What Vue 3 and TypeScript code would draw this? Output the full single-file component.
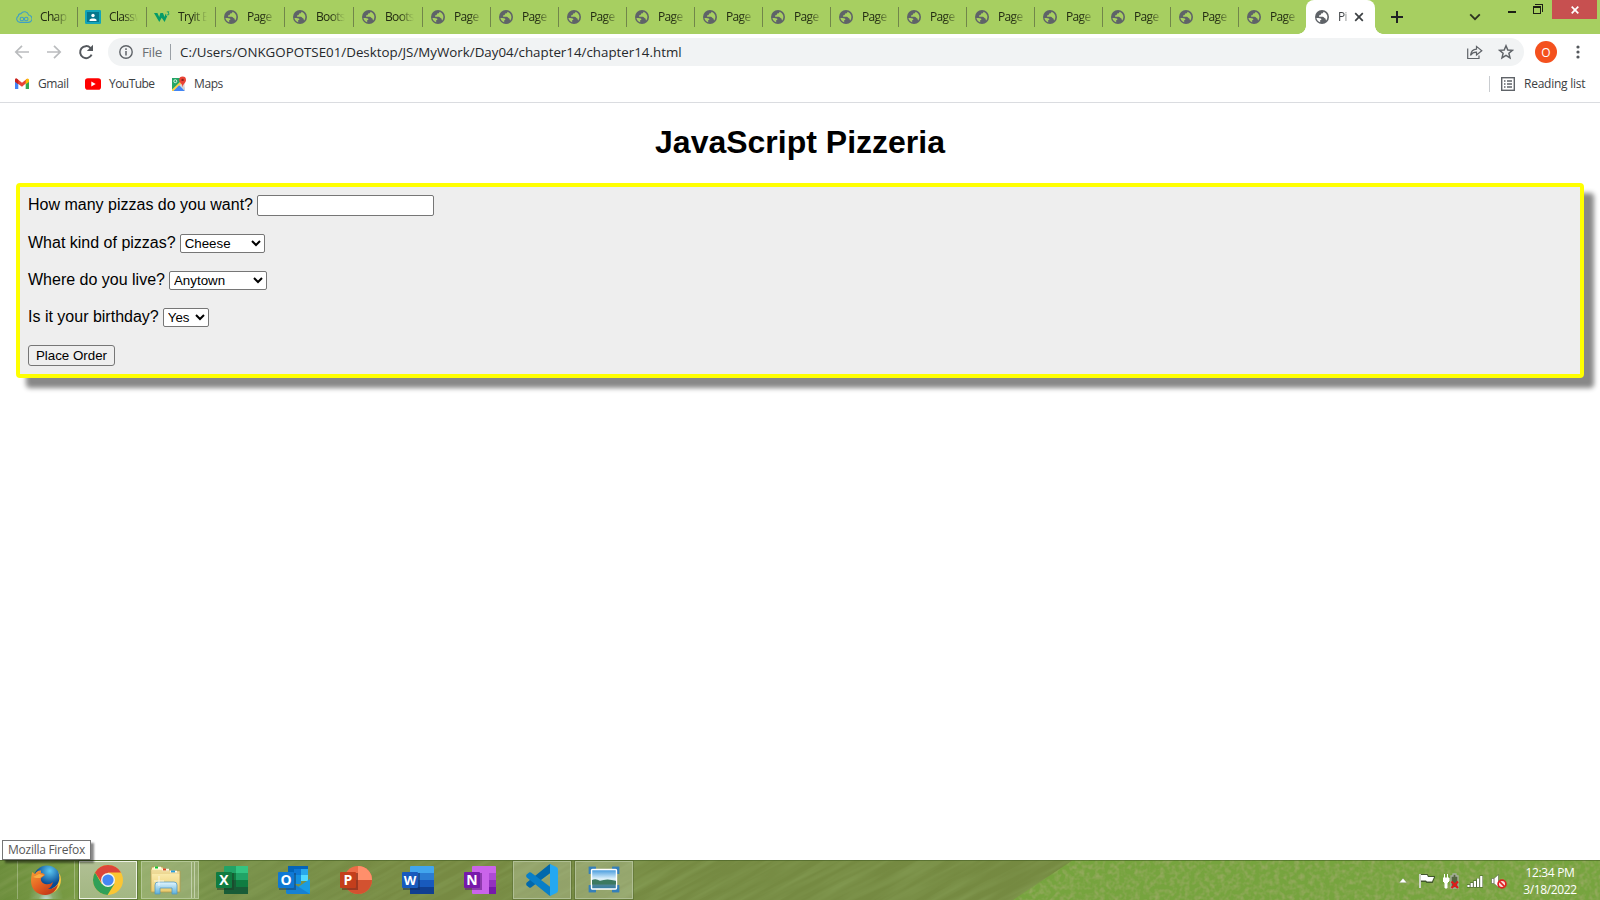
<script setup lang="ts">
import { ref } from 'vue'

type Icon = 'cloud' | 'classroom' | 'w3' | 'globe'
interface Tab { title: string; icon: Icon; wide: boolean }

const tabs: Tab[] = [
  { title: 'Chap', icon: 'cloud', wide: true },
  { title: 'Classw', icon: 'classroom', wide: true },
  { title: 'Tryit E', icon: 'w3', wide: true },
  { title: 'Page', icon: 'globe', wide: true },
  { title: 'Boots', icon: 'globe', wide: true },
  { title: 'Boots', icon: 'globe', wide: true },
  ...Array.from({ length: 13 }, (): Tab => ({ title: 'Page', icon: 'globe', wide: false })),
]

const kind = ref('Cheese')
const town = ref('Anytown')
const birthday = ref('Yes')
const quantity = ref('')
</script>

<template>
  <div class="screen">
    <svg class="defs" width="0" height="0">
      <symbol id="globe" viewBox="0 0 24 24">
        <circle cx="12" cy="12" r="10.5" fill="#5f6368" />
        <path d="M3.6 13.6 C6 13.2 8.5 13.2 10.2 14.2 C11.8 15.2 11 16.8 9.2 17 L9.3 20 C5.8 18.8 4 16.4 3.6 13.6 Z M14.2 4 C14 6.2 12.5 6.6 10.6 6.8 L10 9 L7.5 9.6 L7.7 11.8 L13 11.8 C15.2 12 14.8 14 17 14.2 C17.8 14.4 17.3 16.5 18.3 17.2 C21.4 13.4 20.9 6.6 14.2 4 Z" fill="currentColor" />
      </symbol>
    </svg>

    <header class="tabstrip">
      <div v-for="(t, i) in tabs" :key="i" class="tab" :class="{ wide: t.wide, last: i === tabs.length - 1 }">
        <svg v-if="t.icon === 'globe'" class="fav"><use href="#globe" /></svg>
        <svg v-else-if="t.icon === 'cloud'" class="fav" viewBox="0 0 16 16" fill="none" stroke="#3f9fc4" stroke-width="1.1">
          <path d="M4 13.4 A3.4 3.4 0 0 1 2.2 7.2 A3 3 0 0 1 5 4.6 A4.2 4.2 0 0 1 12.6 6 A3.7 3.7 0 0 1 12 13.4 Z" />
          <circle cx="5.9" cy="10" r="1.8" /><circle cx="10.2" cy="10" r="1.8" />
        </svg>
        <svg v-else-if="t.icon === 'classroom'" class="fav" viewBox="0 0 16 16">
          <rect y="1" width="16" height="14" rx="1.3" fill="#12a4ba" /><rect x="2" y="3" width="12" height="10" fill="#05768d" />
          <circle cx="8" cy="6.5" r="1.7" fill="#fff" /><path d="M4.5 12 V10.8 C5.5 9.1 10.5 9.1 11.5 10.8 V12Z" fill="#fff" />
        </svg>
        <svg v-else class="fav" viewBox="0 0 16 16">
          <path d="M0 4 H3.4 L5.2 8 L6.4 4 H9 L10.5 8 L11.6 4.4 L12.2 6.5 L13.2 7.2 L10.6 13 L7.7 8.8 L5.3 13 Z" fill="#059b68" />
          <path d="M12.8 2.8 H15 L14 4 Q15.4 4.3 15 5.4 Q14.2 6.3 12.7 5.7" fill="none" stroke="#059b68" stroke-width=".8" />
        </svg>
        <span class="tab-title">{{ t.title }}</span>
      </div>
      <div class="tab active">
        <svg class="fav"><use href="#globe" /></svg>
        <span class="tab-title">Pi</span>
        <svg class="tab-close" viewBox="0 0 10 10"><path d="M1.2 1.2 8.8 8.8M8.8 1.2 1.2 8.8" stroke="#3c4043" stroke-width="1.7" /></svg>
      </div>
      <svg class="new-tab" viewBox="0 0 14 14"><path d="M7 1V13M1 7H13" stroke="#202124" stroke-width="2" /></svg>
      <svg class="tab-search" viewBox="0 0 12 8"><path d="M1.2 1.4 6 6.2 10.8 1.4" fill="none" stroke="#2c331f" stroke-width="1.8" /></svg>
      <div class="window-controls">
        <svg class="minimize" viewBox="0 0 8 2"><rect width="8" height="2" fill="#1d2015" /></svg>
        <svg class="restore" viewBox="0 0 10 10" shape-rendering="crispEdges"><path d="M0 2H8V10H0ZM1 4V9H7V4ZM2 0H10V8H9V1H2Z" fill="#1d2015" fill-rule="evenodd" /></svg>
        <span class="close"><svg viewBox="0 0 8 8"><path d="M.7.7 7.3 7.3M7.3.7.7 7.3" stroke="#fff" stroke-width="1.7" /></svg></span>
      </div>
    </header>

    <div class="toolbar">
      <svg class="nav" viewBox="0 0 16 16"><path d="M15 8H2M8 1.8 1.8 8 8 14.2" fill="none" stroke="#babcbe" stroke-width="1.7" /></svg>
      <svg class="nav forward" viewBox="0 0 16 16"><path d="M1 8H14M8 1.8 14.2 8 8 14.2" fill="none" stroke="#babcbe" stroke-width="1.7" /></svg>
      <svg class="nav reload" viewBox="0 0 16 16"><path d="M13.6 10.6A6 6 0 1 1 12.4 3.9L14 5.2" fill="none" stroke="#54585d" stroke-width="2" /><path d="M15 .8V7H8.8Z" fill="#54585d" /></svg>
      <div class="omnibox">
        <svg class="info" viewBox="0 0 14 14"><circle cx="7" cy="7" r="6.2" fill="none" stroke="#5f6368" stroke-width="1.4" /><path d="M7 6V10.5M7 3.3V4.9" stroke="#5f6368" stroke-width="1.5" /></svg>
        <span class="scheme">File</span>
        <span class="divider"></span>
        <span class="url">C:/Users/ONKGOPOTSE01/Desktop/JS/MyWork/Day04/chapter14/chapter14.html</span>
        <svg class="share" viewBox="0 0 16 15" fill="none" stroke="#5f6368" stroke-width="1.2"><path d="M.7 3.5V13.5H12V10.5M3.5 10.4C4 6.3 6.2 4.3 9.5 4.2V1.4L14.8 5.7 9.5 10V7.2C6.8 7.1 5 8 3.5 10.4Z" /></svg>
        <svg class="star" viewBox="0 0 16 16"><path d="M8 1.8 9.8 6 14.4 6.3 10.9 9.3 12 13.9 8 11.4 4 13.9 5.1 9.3 1.6 6.3 6.2 6Z" fill="none" stroke="#5f6368" stroke-width="1.5" /></svg>
      </div>
      <span class="avatar">O</span>
      <svg class="kebab" viewBox="0 0 4 14"><circle cx="2" cy="2" r="1.6" /><circle cx="2" cy="7" r="1.6" /><circle cx="2" cy="12" r="1.6" /></svg>
    </div>

    <nav class="bookmarks">
      <svg class="bm-icon" viewBox="0 0 16 16">
        <path d="M1 3.5V13H4.3V6.5Z" fill="#4285f4" /><path d="M15 3.5V13H11.7V6.5Z" fill="#34a853" /><path d="M1 4Q1.3 2 3 2.8L8 6.8 13 2.8 14 3V5.6L8 10.8 1 5.6Z" fill="#ea4335" /><path d="M1 4Q1.3 2 3 2.8L4.3 4V8.2L1 5.8Z" fill="#c5221f" /><path d="M11.7 3.9 13 2.8Q15 2.2 15 4.1V5.9L11.7 8.3Z" fill="#fbbc04" />
      </svg>
      <span class="bm-label gmail">Gmail</span>
      <svg class="bm-icon yt" viewBox="0 0 16 16"><rect y="2.3" width="16" height="11.4" rx="2.8" fill="#f00" /><path d="M6.3 5.5V10.5L10.7 8Z" fill="#fff" /></svg>
      <span class="bm-label youtube">YouTube</span>
      <svg class="bm-icon" viewBox="0 0 16 16">
        <rect x="1" y="2" width="13" height="13" rx="1" fill="#e7e7e7" /><path d="M1 2H9L12 6 1 15Z" fill="#24a566" /><path d="M2 15 8 9 14 15Z" fill="#4285f4" /><path d="M1 13.5 10 5 11.5 6.5 3 15H1Z" fill="#fbd04a" /><path d="M2.5 15 8 9.5 13 15Z" fill="#4285f4" /><path d="M9 9 11 8 14 12V15Z" fill="#d4d5d6" /><circle cx="4.3" cy="5.2" r="1.5" fill="none" stroke="#d9f3e2" /><path d="M8.2 4A3.4 3.4 0 1 1 15 4C15 6.5 12.3 7.5 11.8 11.2 11.2 7.5 8.2 6.5 8.2 4Z" fill="#ea4335" /><circle cx="11.6" cy="3.9" r="1.2" fill="#8e241b" />
      </svg>
      <span class="bm-label maps">Maps</span>
      <span class="bm-divider"></span>
      <svg class="list-icon" viewBox="0 0 14 14" fill="none" stroke="#5f6368"><rect x=".7" y=".7" width="12.6" height="12.6" stroke-width="1.4" /><path d="M3 4H4.5M6 4H11M3 7H4.5M6 7H11M3 10H4.5M6 10H11" stroke-width="1.5" /></svg>
      <span class="bm-label reading">Reading list</span>
    </nav>

    <main class="page">
      <h1>JavaScript Pizzeria</h1>
      <form class="order" @submit.prevent>
        <div class="row first"><label for="qty">How many pizzas do you want?</label><input id="qty" v-model="quantity" type="text"></div>
        <div class="row"><label for="kind">What kind of pizzas?</label><select id="kind" v-model="kind" class="kind"><option>Cheese</option><option>Pepperoni</option></select></div>
        <div class="row"><label for="town">Where do you live?</label><select id="town" v-model="town" class="town"><option>Anytown</option><option>Sacramento</option></select></div>
        <div class="row"><label for="bday">Is it your birthday?</label><select id="bday" v-model="birthday" class="bday"><option>Yes</option><option>No</option></select></div>
        <button type="submit">Place Order</button>
      </form>
      <span class="tooltip">Mozilla Firefox</span>
    </main>

    <footer class="taskbar">
      <svg class="wallpaper" width="1600" height="40" viewBox="0 0 1600 40">
        <defs>
          <linearGradient id="field"><stop offset="0" stop-color="#6a8c3a" /><stop offset=".06" stop-color="#7d9f46" /><stop offset=".14" stop-color="#768f49" /><stop offset=".25" stop-color="#778a43" /><stop offset=".5" stop-color="#758a42" /><stop offset="1" stop-color="#75893f" /></linearGradient>
          <filter id="grain" x="0" y="0" width="100%" height="100%"><feTurbulence type="fractalNoise" baseFrequency=".2" numOctaves="2" seed="4" /><feColorMatrix values="0 0 0 0 .4  0 0 0 0 .42  0 0 0 0 .18  2.2 0 0 0 -.85" /></filter>
          <filter id="furrow" x="0" y="0" width="100%" height="100%"><feTurbulence type="fractalNoise" baseFrequency=".012 .16" numOctaves="3" seed="8" /><feColorMatrix values="0 0 0 0 .25  0 0 0 0 .36  0 0 0 0 .1  1.1 0 0 0 -.4" /></filter>
        </defs>
        <rect width="1600" height="40" fill="url(#field)" />
        <g transform="rotate(-28 500 20)"><rect x="-100" y="-300" width="1250" height="640" filter="url(#furrow)" /></g>
        <path d="M1013 40 1073 0H1600V40Z" fill="#76a43e" />
        <path d="M1013 40 1073 0H1600V40Z" filter="url(#grain)" clip-path="polygon(0 100%, 60px 0, 100% 0, 100% 100%)" opacity=".6" />
        <rect width="1600" height="1" fill="#3f5a20" opacity=".55" />
      </svg>

      <div class="tasks">
        <div class="task firefox">
          <svg viewBox="0 0 32 32">
            <defs><radialGradient id="sea" cx=".6" cy=".2"><stop stop-color="#5cc8f2" /><stop offset="1" stop-color="#094a94" /></radialGradient><linearGradient id="fox" x2=".8" y2="1"><stop stop-color="#f6a035" /><stop offset=".5" stop-color="#e66322" /><stop offset="1" stop-color="#bd3318" /></linearGradient></defs>
            <circle cx="17" cy="15" r="13.5" fill="url(#sea)" />
            <path d="M28 7C31 14 29 21 23 24L17 29C25 31 33 22 30.5 12Z" fill="#fcc93d" />
            <path d="M2 8 5 10Q7 6 11 6.5L11 9Q14 9 15 11L11 14Q10 18 15 20 20 21 23 18 22 23 18 25 25 25 28 20C27 27 21 31 15.5 31 6 31 1 24 1 17 1 13 2 10 2 8Z" fill="url(#fox)" />
            <path d="M3 13 9 10 14 11 10 14 6 14Z" fill="#f9ad43" />
          </svg>
        </div>
        <div class="task chrome">
          <svg viewBox="0 0 32 32"><circle cx="16" cy="16" r="15" fill="#fbc634" /><path d="M3.01 8.5A15 15 0 0 0 15.5 31L22.5 19.75 9.5 19.75Z" fill="#30a058" /><path d="M3.01 8.5A15 15 0 0 1 29 8.5H16L10 19Z" fill="#dc453a" /><circle cx="16" cy="16" r="7" fill="#f4f5ef" /><circle cx="16" cy="16" r="5.6" fill="#4587f4" /></svg>
        </div>
        <div class="task explorer">
          <svg viewBox="0 0 34 32"><defs><linearGradient id="paper" y2="1" x2="0"><stop stop-color="#fff5c2" /><stop offset="1" stop-color="#eacb6e" /></linearGradient><linearGradient id="glass" y2="1" x2="0"><stop stop-color="#e3f6ff" /><stop offset="1" stop-color="#5cafd9" /></linearGradient></defs>
            <path d="M3 3H14V6H22V7H31V28H2V6Z" fill="url(#paper)" stroke="#b99c4e" stroke-width=".8" /><path d="M5 4H12M13 6H20M21 8H28" stroke="#fffbe9" stroke-width="2.5" /><path d="M6 3.5H9" stroke="#12c22e" stroke-width="2" /><path d="M14 5.5H17" stroke="#e04524" stroke-width="2" /><path d="M22 7.5H26" stroke="#269fe0" stroke-width="2" /><path d="M3 9H31M3 7H21" stroke="#d0b05c" stroke-width=".6" />
            <path d="M6 30V21Q6 18 9 18H25Q28 18 28 21V30H23V24H11V30Z" fill="url(#glass)" stroke="#559ac0" stroke-width=".8" /><path d="M10 12V22M5 17H15" stroke="#fff" stroke-width=".7" />
          </svg>
          <i></i><i></i>
        </div>
        <div class="task"><svg viewBox="0 0 32 32">
          <rect x="8" y="2" width="24" height="28" rx="1" fill="#21a366" /><path d="M20 2H32V9H20Z" fill="#33c481" /><path d="M8 9H20V16H8ZM20 16H32V23H20Z" fill="#107c41" /><path d="M8 16H20V23H32V30H8Z" fill="#185c37" /><rect x="1" y="9" width="17" height="17" fill="#1d3e26" opacity=".5" /><rect y="8" width="16" height="16" rx="1" fill="#107c41" /><text x="8" y="21">X</text></svg></div>
        <div class="task"><svg viewBox="0 0 32 32">
          <path d="M10 2H30V16H10Z" fill="#0364b8" /><path d="M16 5H23V11H16Z" fill="#0f78d4" /><path d="M23 5H30V11H23Z" fill="#28a8ea" /><path d="M23 11H30V17H23Z" fill="#50d9ff" /><path d="M10 11H23V20H10Z" fill="#1490df" /><path d="M8 15 20 23 32 15V30H10Q8 30 8 28Z" fill="#1a9be3" /><path d="M8 15 32 30H10Q8 30 8 28Z" fill="#1681d2" /><rect x="1" y="9" width="17" height="17" fill="#123b65" opacity=".5" /><rect y="8" width="16" height="16" rx="1" fill="#0f78d4" /><text x="8" y="21">O</text></svg></div>
        <div class="task"><svg viewBox="0 0 32 32">
          <circle cx="18" cy="16" r="14" fill="#ed6c47" /><path d="M18 2A14 14 0 0 1 32 16H18Z" fill="#ff8f6b" /><path d="M4 16H32A14 14 0 0 1 4 16Z" fill="#d35230" /><rect x="2" y="9" width="16" height="17" fill="#641e11" opacity=".5" /><rect y="8" width="16" height="16" rx="1" fill="#c43e1c" /><text x="8" y="21">P</text></svg></div>
        <div class="task"><svg viewBox="0 0 32 32">
          <rect x="8" y="2" width="24" height="28" rx="1" fill="#41a5ee" /><path d="M8 9H32V16H8Z" fill="#2b7cd3" /><path d="M8 16H32V23H8Z" fill="#185abd" /><path d="M8 23H32V30H8Z" fill="#103f91" /><rect x="1" y="9" width="17" height="17" fill="#102757" opacity=".5" /><rect y="8" width="16" height="16" rx="1" fill="#185abd" /><text x="8" y="21" class="narrow">W</text></svg></div>
        <div class="task"><svg viewBox="0 0 32 32">
          <rect x="8" y="2" width="24" height="28" rx="1" fill="#ca64ea" /><path d="M25 9H32V16H25Z" fill="#ae4bd5" /><path d="M25 16H32V23H25Z" fill="#9332bf" /><path d="M25 23H32V30H25Z" fill="#7719aa" /><rect x="1" y="9" width="17" height="17" fill="#5b197a" opacity=".55" /><rect y="8" width="16" height="16" rx="1" fill="#7719aa" /><text x="8" y="21">N</text></svg></div>
        <div class="task open"><svg viewBox="0 0 32 32">
          <path d="M3.5 23.8 .6 21.4Q-.4 20 .8 18.4L23.2 .4Q24 0 25 .4V8.6L5 23.4Q4.2 24 3.5 23.8Z" fill="#0168ac" /><path d="M3.5 8.2 .6 10.6Q-.4 12 .8 13.6L23.2 31.6Q24 32 25 31.6V23.4L5 8.6Q4.2 8 3.5 8.2Z" fill="#087fc8" /><path d="M24 0 30.4 3Q32 3.8 32 5.6V26.4Q32 28.2 30.4 29L24 32Z" fill="#24a8f2" /></svg></div>
        <div class="task open"><svg viewBox="0 0 32 32">
          <defs><linearGradient id="sky" x2="0" y2="1"><stop stop-color="#3f97dc" /><stop offset=".5" stop-color="#e4f5fc" /><stop offset=".7" stop-color="#58888f" /><stop offset="1" stop-color="#327ca6" /></linearGradient></defs>
          <path d="M2.5 10V4.5H8M24 4.5H29.5V10M29.5 21V26.5H24M8 26.5H2.5V21" fill="none" stroke="#357fb9" stroke-width="3.4" /><rect x="3.5" y="5.5" width="25" height="19.5" rx="1" fill="url(#sky)" stroke="#fff" stroke-width="1.4" /><path d="M4 16Q8 14 12 17 19 14 28 17V20.5H4Z" fill="#3c7960" /><path d="M1.5 9.5V3.5H7.5M24.5 3.5H30.5V9.5M30.5 21.5V27.5H24.5M7.5 27.5H1.5V21.5" fill="none" stroke="#357fb9" stroke-width="1.4" /></svg></div>
      </div>

      <div class="tray">
        <svg class="up" viewBox="0 0 8 5"><path d="M0 4.8 4 .3 8 4.8Z" fill="#fff" stroke="#46602b" stroke-width=".3" /></svg>
        <svg class="tray-icon flag" viewBox="0 0 16 16"><path d="M1 1V15M2 2H8L9 4H15L13 9H8L7 8H2Z" fill="#fff" stroke="#42572c" stroke-width="2" /><path d="M1 1V15" stroke="#fff" stroke-width="1.5" /><path d="M2 2H8L9 4H15L13 8.5H8L7 7.5H2Z" fill="#fff" /></svg>
        <svg class="tray-icon power" viewBox="0 0 16 16"><path d="M1.5 1V5M4.5 1V5M0 5H6V8L4 10V15H2V10L0 8Z" fill="#fff" stroke="#fff" stroke-width="1" /><path d="M8 15V3H10V1H13V3H15V15Z" fill="#55663f" stroke="#a9b0a0" stroke-width="1.3" /><path d="M8.5 8.5 15 15M15 8.5 8.5 15" stroke="#e01a1a" stroke-width="2.2" /></svg>
        <svg class="tray-icon" viewBox="0 0 16 16"><path d="M1.5 14.5V11.5M4.7 14.5V9.5M7.9 14.5V7.5M11.1 14.5V5.5M14.3 14.5V2.5" stroke="#42572c" stroke-width="3.2" /><path d="M1.5 14V12M4.7 14V10M7.9 14V8M11.1 14V5.5M14.3 14V3" stroke="#fff" stroke-width="2.3" /></svg>
        <svg class="tray-icon" viewBox="0 0 16 16"><path d="M.5 5.5H3L7.5 1.5V14.5L3 10.5H.5Z" fill="#fff" stroke="#53643d" stroke-width=".6" /><path d="M3 5.5V10.5" stroke="#777" /><circle cx="11" cy="11" r="3.9" fill="#f8dada" stroke="#df2020" stroke-width="1.7" /><path d="M8.4 8.4 13.6 13.6" stroke="#df2020" stroke-width="1.6" /></svg>
        <div class="clock"><span>12:34 PM</span><span class="date">3/18/2022</span></div>
      </div>
    </footer>
  </div>
</template>

<style>
html, body { margin: 0; overflow: hidden; }
</style>

<style scoped>
* { box-sizing: border-box; }
.screen { width: 1600px; height: 900px; display: flex; flex-direction: column; background: #fff; overflow: hidden; font-family: "Open Sans", "Noto Sans", sans-serif; }
svg { display: block; flex: none; }
.defs { position: absolute; }

.tabstrip { height: 34px; flex: none; display: flex; align-items: center; background: #a7cf61; padding-left: 8px; }
.tab { position: relative; width: 68px; height: 34px; flex: none; display: flex; align-items: center; padding-left: 8px; }
.tab.wide { width: 69px; }
.tab::after { content: ""; position: absolute; right: -1px; top: 7px; width: 1px; height: 20px; background: #71864a; }
.tab.last::after, .tab.active::after { display: none; }
.fav { width: 16px; height: 16px; color: #a7cf61; }
.tab-title { width: 29px; margin-left: 8px; overflow: hidden; white-space: nowrap; font-size: 12px; letter-spacing: -.65px; line-height: 16px; color: #222b12; -webkit-mask-image: linear-gradient(90deg, #000 50%, transparent); mask-image: linear-gradient(90deg, #000 50%, transparent); }
.tab.active { width: 69px; background: #fff; border-radius: 8px 8px 0 0; }
.tab.active::before { content: ""; position: absolute; left: -8px; right: -8px; bottom: 0; height: 8px; background: radial-gradient(circle at 0 0, transparent 7.5px, #fff 8px) left / 8px 8px no-repeat, radial-gradient(circle at 100% 0, transparent 7.5px, #fff 8px) right / 8px 8px no-repeat; }
.active .fav { color: #fff; }
.active .tab-title { width: 11px; color: #3c4043; }
.tab-close { width: 10px; height: 10px; margin-left: 5px; }
.new-tab { width: 14px; height: 14px; margin-left: 15px; }
.tab-search { width: 12px; height: 8px; margin-left: 65px; }
.window-controls { height: 34px; margin-left: auto; display: flex; align-items: flex-start; padding-right: 3px; }
.minimize { width: 8px; height: 2px; margin-top: 11px; }
.restore { width: 10px; height: 10px; margin: 4px 9px 0 17px; }
.close { width: 45px; height: 19px; background: #c75050; display: flex; align-items: center; justify-content: center; }
.close svg { width: 8px; height: 8px; }

.toolbar { height: 36px; flex: none; display: flex; align-items: center; padding: 0 14px; }
.nav { width: 16px; height: 16px; }
.forward { margin-left: 16px; }
.reload { margin-left: 16px; }
.omnibox { width: 1416px; height: 28px; flex: none; margin-left: 14px; background: #f1f3f4; border-radius: 14px; display: flex; align-items: center; padding: 0 11px; font-size: 14px; }
.info { width: 14px; height: 14px; }
.scheme { width: 28px; margin-left: 9px; color: #6b6f73; font-size: 13.5px; letter-spacing: -.35px; }
.divider { width: 1px; height: 16px; background: #9aa0a6; }
.url { margin-left: 9px; font-size: 13.33px; color: #25282b; white-space: nowrap; }
.share { width: 16px; height: 15px; margin-left: auto; }
.star { width: 16px; height: 16px; margin: 0 -1px 0 15px; }
.avatar { width: 22px; height: 22px; flex: none; margin-left: 11px; border-radius: 50%; background: #f4511e; color: #fff; font-size: 12px; display: flex; align-items: center; justify-content: center; }
.kebab { width: 4px; height: 14px; margin-left: 19px; fill: #54585d; }

.bookmarks { height: 33px; flex: none; display: flex; align-items: center; border-bottom: 1px solid #dadce0; padding: 0 14px 4px; }
.bm-icon { width: 16px; height: 16px; }
.bm-label { margin: -2px 0 0 8px; font-size: 12px; letter-spacing: -.4px; color: #3c4043; white-space: nowrap; }
.bm-label.gmail { width: 31px; }
.bm-label.youtube { width: 45px; letter-spacing: -.55px; }
.bm-label.maps { margin-left: 7px; }
.bm-icon.yt { margin-left: 16px; }
.youtube + .bm-icon { margin-left: 17px; }
.bm-divider { width: 1px; height: 16px; background: #c9ccd0; margin-left: auto; }
.list-icon { width: 14px; height: 14px; margin-left: 11px; }
.bm-label.reading { width: 62px; margin-left: 9px; letter-spacing: -.25px; }

.page { position: relative; flex: 1; padding: 0 16px; font-family: "Liberation Sans", Arial, sans-serif; color: #000; }
h1 { margin: 21px 0 22px; font-size: 32px; line-height: 37px; text-align: center; font-weight: bold; }
.order { height: 195px; border: 4px solid #ff0; border-radius: 4px; background: #eee; padding: 8px; box-shadow: 10px 10px 5px #888; }
.row { height: 20px; margin-bottom: 17px; display: flex; align-items: flex-start; font-size: 16px; line-height: 20px; }
.row.first { height: 21px; }
label { margin-right: 4px; white-space: nowrap; }
input { width: 177px; height: 21px; margin: 0; padding: 1px 2px; border: 1px solid #767676; border-radius: 2px; background: #fff; }
select { height: 19px; margin: 1px 0 0; font: 13.333px "Liberation Sans", Arial, sans-serif; border: 1px solid #767676; border-radius: 2px; background-color: #fff; color: #000; }
.kind { width: 85px; }
.town { width: 98px; }
.bday { width: 46px; }
button { width: 87px; height: 21px; margin: 18px 0 0; padding: 0; display: block; font: 13.333px "Liberation Sans", Arial, sans-serif; border: 1px solid #767676; border-radius: 3px; background: #efefef; color: #000; }
.tooltip { position: absolute; left: 2px; bottom: 0; width: 89px; height: 20px; border: 1px solid #767676; background: #fff; box-shadow: 3px 3px 2px #0007; font: 12px/18px "Open Sans", "Noto Sans", sans-serif; letter-spacing: -.27px; text-align: center; color: #575757; white-space: nowrap; z-index: 2; }

.taskbar { position: relative; height: 40px; flex: none; display: flex; align-items: center; justify-content: space-between; }
.wallpaper { position: absolute; inset: 0; overflow: hidden; }
.tasks { position: relative; display: flex; align-items: center; gap: 4px; padding-left: 17px; }
.task { width: 58px; height: 38px; display: flex; align-items: center; justify-content: center; }
.task svg { width: 32px; height: 32px; }
.task text { font: bold 14px "Open Sans", sans-serif; fill: #fff; text-anchor: middle; }
.task text.narrow { font-size: 13px; }
.task.firefox { border: solid #ffffff45; border-width: 0 1px; background: radial-gradient(ellipse at 50% 110%, #d5efff 0, #b7d7c455 20%, transparent 45%); }
.task.chrome { border: 1px solid #eef2e5; background: linear-gradient(#b0bf93, #a3b783); outline: 1px solid #465b2b88; }
.task.explorer { position: relative; border: 1px solid #b4c796; background: #ffffff35; padding-right: 8px; }
.task.explorer svg { width: 34px; }
.task.explorer i { position: absolute; top: 0; bottom: 0; right: 6px; width: 1px; background: #c2d0aa; }
.task.explorer i + i { right: 3px; }
.task.open { border: 1px solid #b0bf94; background: #ffffff35; outline: 1px solid #4b602b66; }

.tray { position: relative; display: flex; align-items: center; color: #fff; padding-right: 15px; }
.up { width: 8px; height: 5px; margin-right: 12px; }
.tray-icon { width: 16px; height: 16px; margin: 2px 8px 0 0; }
.clock { width: 70px; padding-top: 2px; display: flex; flex-direction: column; font-size: 12px; line-height: 17px; text-align: center; letter-spacing: -.35px; }
</style>
